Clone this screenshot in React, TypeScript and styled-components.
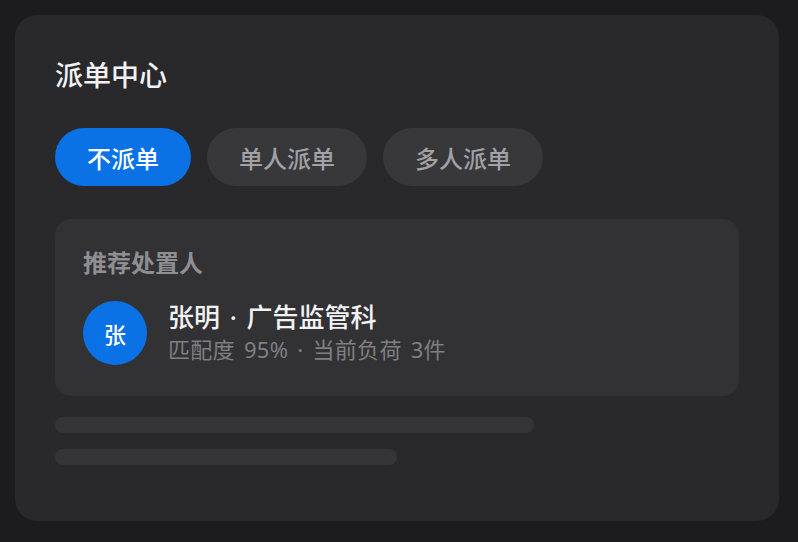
import React, { useState } from 'react';
import styled, { createGlobalStyle } from 'styled-components';

const GlobalStyle = createGlobalStyle`
  html, body {
    margin: 0;
    padding: 0;
    background: #1c1c1e;
  }
  body {
    font-family: "Noto Sans", "Noto Sans CJK SC", sans-serif;
    -webkit-font-smoothing: antialiased;
  }
`;

const modes = ['不派单', '单人派单', '多人派单'];

const App = () => {
  const [mode, setMode] = useState(0);

  return (
    <Page>
      <GlobalStyle />
      <Card>
        <Title>派单中心</Title>
        <Tabs>
          {modes.map((m, i) => (
            <Tab key={m} active={i === mode} onClick={() => setMode(i)}>
              {m}
            </Tab>
          ))}
        </Tabs>
        <Recommend>
          <Label>推荐处置人</Label>
          <Person>
            <Avatar>张</Avatar>
            <Info>
              <Name>张明 · 广告监管科</Name>
              <Meta>匹配度 95% · 当前负荷 3件</Meta>
            </Info>
          </Person>
        </Recommend>
        <Skeleton>
          <Bar width="70%" />
          <Bar width="50%" />
        </Skeleton>
      </Card>
    </Page>
  );
};

const Page = styled.div`
  width: 798px;
  height: 542px;
  padding: 15px 19px 21px 15px;
  box-sizing: border-box;
`;

const Card = styled.section`
  height: 100%;
  box-sizing: border-box;
  background: #29292b;
  border-radius: 22px;
  padding: 40px;
  display: flex;
  flex-direction: column;
`;

const Title = styled.h1`
  margin: 0;
  font-size: 28px;
  line-height: 40px;
  font-weight: 500;
  color: #f2f2f4;
`;

const Tabs = styled.div`
  display: flex;
  gap: 16px;
  margin-top: 33px;
`;

const Tab = styled.button<{ active?: boolean }>`
  height: 58px;
  padding: 0 32px;
  border: none;
  border-radius: 29px;
  font-family: inherit;
  font-size: 24px;
  font-weight: 500;
  cursor: pointer;
  background: ${(p) => (p.active ? '#0a72e5' : '#38383a')};
  color: ${(p) => (p.active ? '#ffffff' : '#a1a1a6')};
`;

const Recommend = styled.div`
  margin-top: 33px;
  background: #323234;
  border-radius: 16px;
  padding: 28px 28px 31px;
  display: flex;
  flex-direction: column;
  gap: 22px;
`;

const Label = styled.div`
  font-size: 24px;
  line-height: 32px;
  font-weight: 700;
  color: #8e8e93;
`;

const Person = styled.div`
  display: flex;
  align-items: center;
  gap: 21px;
`;

const Avatar = styled.div`
  width: 64px;
  height: 64px;
  border-radius: 50%;
  background: #0a72e5;
  color: #fff;
  font-size: 22px;
  font-weight: 500;
  display: flex;
  align-items: center;
  justify-content: center;
  flex-shrink: 0;
`;

const Info = styled.div`
  display: flex;
  flex-direction: column;
`;

const Name = styled.div`
  font-size: 26px;
  line-height: 32px;
  font-weight: 500;
  color: #f2f2f4;
  word-spacing: 3px;
`;

const Meta = styled.div`
  font-size: 22px;
  line-height: 32px;
  color: #7f7f84;
  word-spacing: 3px;
  letter-spacing: 0.3px;
`;

const Skeleton = styled.div`
  margin-top: 21px;
  display: flex;
  flex-direction: column;
  gap: 16px;
`;

const Bar = styled.div<{ width: string }>`
  width: ${(p) => p.width};
  height: 16px;
  border-radius: 8px;
  background: #353537;
`;

export default App;
